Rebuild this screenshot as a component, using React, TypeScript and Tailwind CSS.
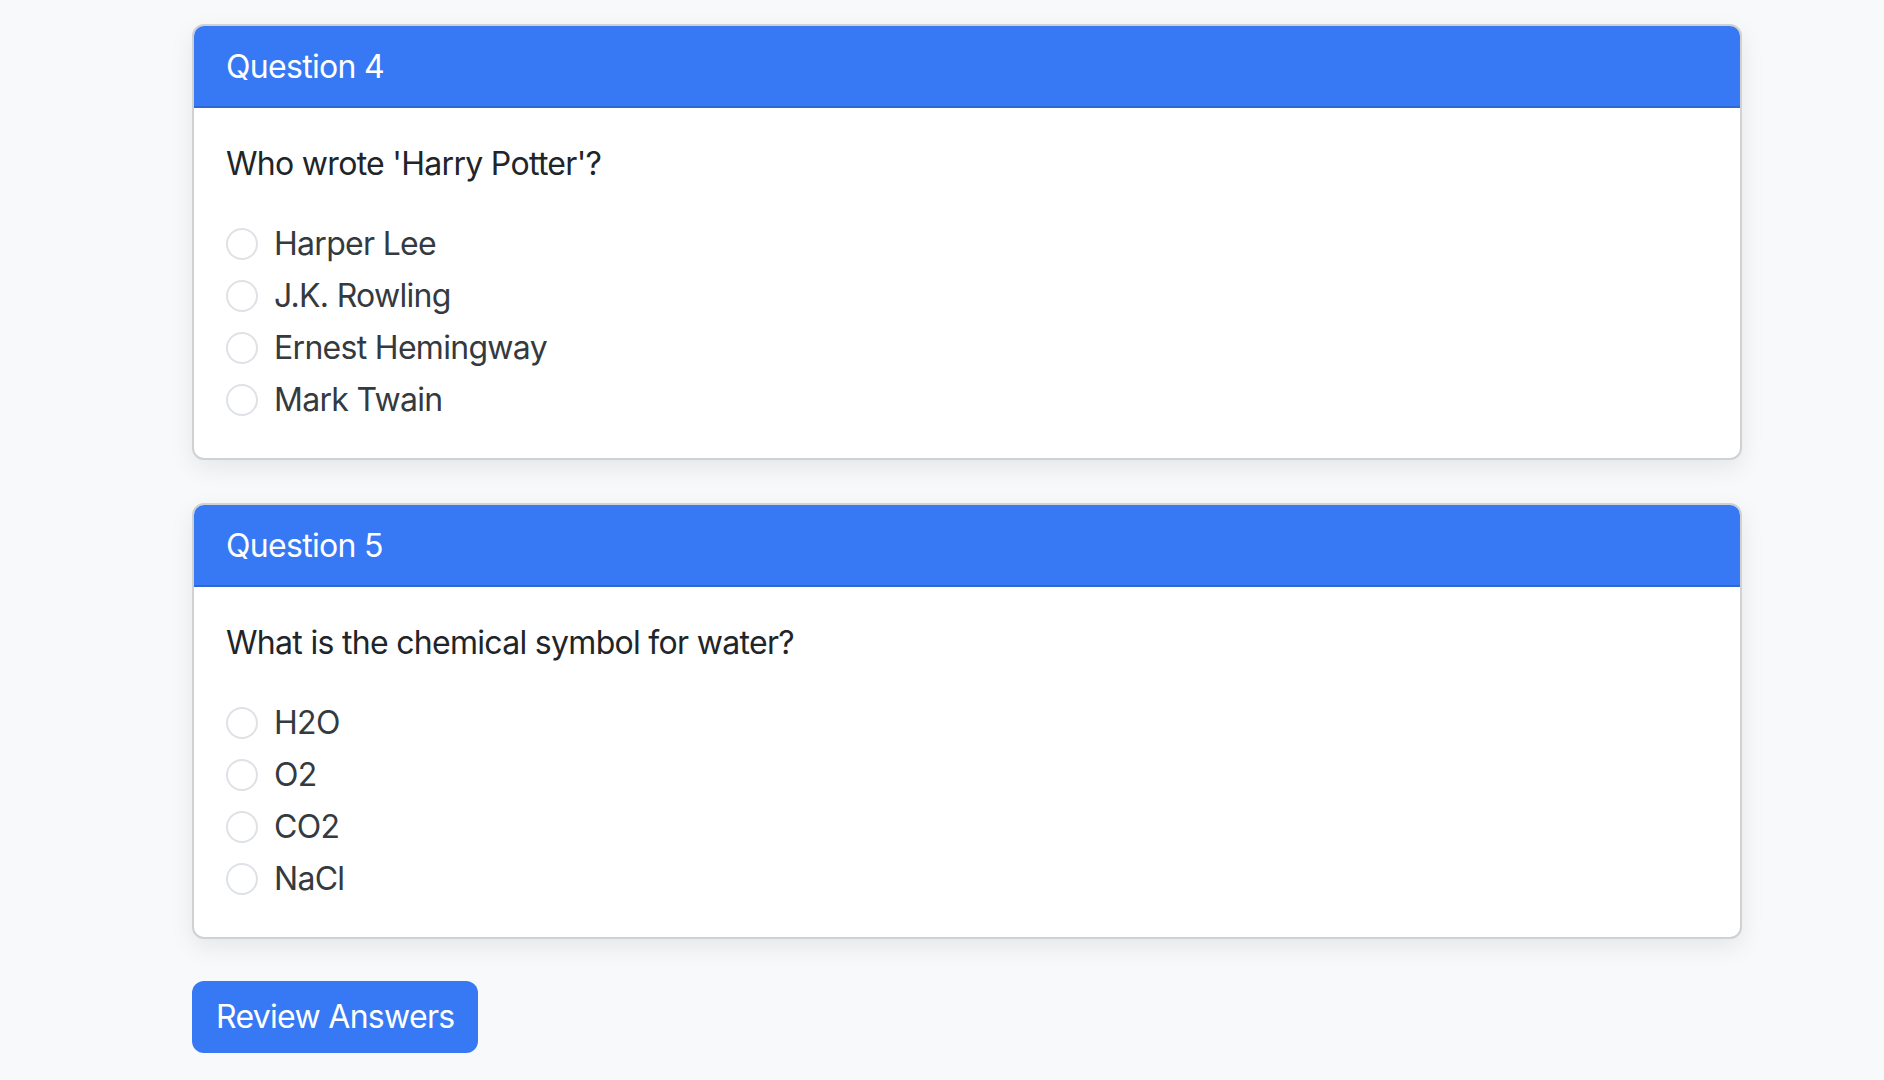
import React, { useState } from 'react';

interface Question {
  id: number;
  text: string;
  options: string[];
}

const questions: Question[] = [
  {
    id: 4,
    text: "Who wrote 'Harry Potter'?",
    options: ['Harper Lee', 'J.K. Rowling', 'Ernest Hemingway', 'Mark Twain'],
  },
  {
    id: 5,
    text: 'What is the chemical symbol for water?',
    options: ['H2O', 'O2', 'CO2', 'NaCl'],
  },
];

const QuestionCard: React.FC<{
  question: Question;
  selected?: string;
  onSelect: (option: string) => void;
}> = ({ question, selected, onSelect }) => {
  return (
    <div className="w-[1550px] rounded-[12px] border-2 border-[#d0d1d2] bg-white shadow-[0_8px_24px_rgba(0,0,0,0.08)] overflow-hidden">
      <div className="bg-[#3779f5] border-b-2 border-[#2f68d2] px-[32px] pt-[17px] pb-[15px] text-[32px] leading-[48px] text-white">
        Question {question.id}
      </div>
      <div className="px-[32px] pt-[32px] pb-[30px]">
        <p className="mb-[32px] text-[32px] leading-[48px] text-[#212529]">{question.text}</p>
        {question.options.map((option) => (
          <label
            key={option}
            className="mb-[4px] flex h-[48px] cursor-pointer items-start"
            onClick={() => onSelect(option)}
          >
            <span
              className={`mt-[8px] h-[32px] w-[32px] shrink-0 rounded-full border-2 ${
                selected === option ? 'border-[#3779f5] bg-[#3779f5]' : 'border-[#dee2e6] bg-white'
              }`}
            />
            <span className="ml-[16px] text-[32px] leading-[48px] text-[#343a40]">{option}</span>
          </label>
        ))}
      </div>
    </div>
  );
};

export default function App() {
  const [answers, setAnswers] = useState<Record<number, string>>({});

  return (
    <div
      className="min-h-screen bg-[#f8f9fa] pl-[192px] pt-[24px] pb-[28px] tracking-[-0.7px]"
      style={{ fontFamily: 'Inter, "Liberation Sans", sans-serif' }}
    >
      <div className="flex flex-col gap-[43px]">
        {questions.map((q) => (
          <QuestionCard
            key={q.id}
            question={q}
            selected={answers[q.id]}
            onSelect={(option) => setAnswers({ ...answers, [q.id]: option })}
          />
        ))}
      </div>
      <button className="mt-[42px] rounded-[12px] bg-[#3779f5] px-[24px] py-[12px] text-[32px] leading-[48px] text-white">
        Review Answers
      </button>
    </div>
  );
}
